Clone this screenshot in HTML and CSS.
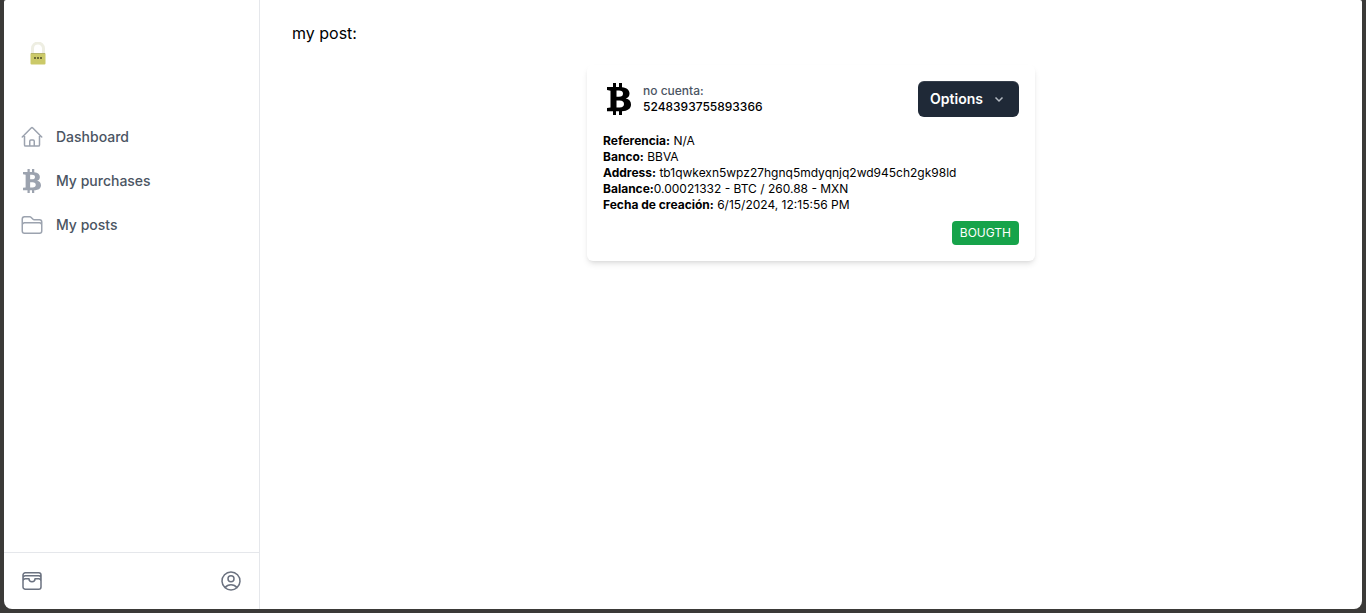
FILE: index.html
```html
<!DOCTYPE html>
<html lang="en">
<head>
<meta charset="utf-8">
<meta name="viewport" content="width=device-width, initial-scale=1">
<title>My posts</title>
<link rel="stylesheet" href="styles.css">
</head>
<body>
<svg class="sprite" aria-hidden="true">
  <symbol id="bitcoin" viewBox="0 0 24 32">
    <path fill-rule="evenodd" d="M6 0h3v4h3V0h3v4.200c5 .5 7.500 2.800 7.500 6.300 0 2.600-1.300 4.200-3.700 5 3.400.7 5.200 2.900 5.200 6 0 4.200-3.300 6.500-9 6.700V32h-3v-3.800H9V32H6v-3.800H0v-3.100l3.500-.6V7.700L0 7.100V4h6zM9.500 7.500v6.300h2.500c2.700 0 4-1 4-3.200 0-2.100-1.400-3.100-4-3.100zM9.500 17.500v7h3.200c2.900 0 4.300-1.200 4.300-3.500s-1.400-3.500-4.300-3.500z"/>
  </symbol>
</svg>
<div class="app">
  <aside class="sidebar">
    <a class="logo" href="#" aria-label="Home">
      <svg width="20" height="24" viewBox="0 0 20 24" aria-hidden="true">
        <path class="shackle" d="M4.500 12V6.500a5.500 5.500 0 0 1 11 0V12"/>
        <rect class="lock" x="2.500" y="11" width="15" height="11.500" rx="1"/>
        <path class="lock-line" d="M3 11.500h14"/>
        <path class="code" d="M6 16h8"/>
      </svg>
    </a>
    <nav class="nav">
      <a href="#">
        <svg class="icon" viewBox="0 0 24 24" aria-hidden="true"><path d="m2.250 12 8.954-8.955c.44-.439 1.152-.439 1.591 0L21.750 12M4.500 9.750v10.125c0 .621.504 1.125 1.125 1.125H9.750v-4.875c0-.621.504-1.125 1.125-1.125h2.250c.621 0 1.125.504 1.125 1.125V21h4.125c.621 0 1.125-.504 1.125-1.125V9.750M8.250 21h8.250"/></svg>
        Dashboard
      </a>
      <a href="#">
        <svg class="coin" aria-hidden="true"><use href="#bitcoin"/></svg>
        My purchases
      </a>
      <a href="#">
        <svg class="icon" viewBox="0 0 24 24" aria-hidden="true"><path d="M2.250 12.750V12A2.250 2.250 0 0 1 4.500 9.750h15A2.250 2.250 0 0 1 21.750 12v.75m-8.690-6.440-2.120-2.120a1.500 1.500 0 0 0-1.061-.44H4.500A2.250 2.250 0 0 0 2.250 6v12a2.250 2.250 0 0 0 2.250 2.250h15A2.250 2.250 0 0 0 21.750 18V9a2.250 2.250 0 0 0-2.250-2.250h-5.379a1.500 1.500 0 0 1-1.060-.44Z"/></svg>
        My posts
      </a>
    </nav>
    <div class="tools">
      <button type="button" aria-label="Wallet">
        <svg class="icon" viewBox="0 0 24 24" aria-hidden="true"><path d="M21 12a2.250 2.250 0 0 0-2.250-2.250H15a3 3 0 1 1-6 0H5.250A2.250 2.250 0 0 0 3 12m18 0v6a2.250 2.250 0 0 1-2.250 2.250H5.250A2.250 2.250 0 0 1 3 18v-6m18 0V9M3 12V9m18 0a2.250 2.250 0 0 0-2.250-2.250H5.250A2.250 2.250 0 0 0 3 9m18 0V6a2.250 2.250 0 0 0-2.250-2.250H5.250A2.250 2.250 0 0 0 3 6v3"/></svg>
      </button>
      <button type="button" aria-label="Account">
        <svg class="icon" viewBox="0 0 24 24" aria-hidden="true"><path d="M17.982 18.725A7.488 7.488 0 0 0 12 15.750a7.488 7.488 0 0 0-5.982 2.975m11.963 0a9 9 0 1 0-11.963 0m11.963 0A8.966 8.966 0 0 1 12 21a8.966 8.966 0 0 1-5.982-2.275M15 9.750a3 3 0 1 1-6 0 3 3 0 0 1 6 0Z"/></svg>
      </button>
    </div>
  </aside>
  <main class="main">
    <p class="title">my post:</p>
    <article class="card">
      <header class="card-head">
        <svg class="card-coin" aria-hidden="true"><use href="#bitcoin"/></svg>
        <div class="account">
          <p class="label">no cuenta:</p>
          <p>5248393755893366</p>
        </div>
        <button class="options" type="button">
          Options
          <svg width="16" height="16" viewBox="0 0 16 16" aria-hidden="true"><path d="m4.500 6.500 3.500 3.500 3.500-3.500"/></svg>
        </button>
      </header>
      <div class="details">
        <p><b>Referencia:</b> N/A</p>
        <p><b>Banco:</b> BBVA</p>
        <p><b>Address:</b> tb1qwkexn5wpz27hgnq5mdyqnjq2wd945ch2gk98ld</p>
        <p><b>Balance:</b>0.00021332 - BTC / 260.88 - MXN</p>
        <p><b>Fecha de creación:</b> 6/15/2024, 12:15:56 PM</p>
      </div>
      <span class="badge">BOUGTH</span>
    </article>
  </main>
</div>
</body>
</html>
```
FILE: styles.css
```css
* {
  box-sizing: border-box;
}

body {
  margin: 0;
  padding: 0 4px 4px;
  min-height: 100vh;
  display: flex;
  background: #3b3a38;
  color: #000;
  font-family: Inter, "Liberation Sans", sans-serif;
  font-size: 16px;
  line-height: 24px;
}

p {
  margin: 0;
}

button {
  border: 0;
  background: none;
  font: inherit;
  cursor: pointer;
}

.sprite {
  position: absolute;
  width: 0;
  height: 0;
}

.app {
  flex: 1;
  display: flex;
  overflow: hidden;
  background: #fff;
  border-radius: 2px 2px 8px 8px;
}

.sidebar {
  width: 256px;
  flex-shrink: 0;
  display: flex;
  flex-direction: column;
  border-right: 1px solid #e5e7eb;
}

.logo {
  display: flex;
  padding: 42px 24px 0;
}

.shackle {
  fill: none;
  stroke: #eeeee2;
  stroke-width: 3;
}

.lock {
  fill: #cbc968;
}

.lock-line {
  stroke: #b5b36a;
}

.code {
  stroke: #6b6935;
  stroke-width: 2;
  stroke-dasharray: 2 1;
}

.nav {
  flex: 1;
  display: flex;
  flex-direction: column;
  gap: 4px;
  padding: 51px 8px 0;
}

.nav a {
  display: flex;
  align-items: center;
  gap: 12px;
  padding: 8px;
  color: #4b5563;
  font-size: 14px;
  font-weight: 500;
  text-decoration: none;
}

.icon {
  width: 24px;
  height: 24px;
  fill: none;
  stroke: currentColor;
  stroke-width: 1.5;
  stroke-linecap: round;
  stroke-linejoin: round;
}

.nav svg {
  color: #9ca3af;
}

.coin {
  width: 24px;
  height: 24px;
  fill: currentColor;
}

.tools {
  display: flex;
  justify-content: space-between;
  padding: 16px;
  border-top: 1px solid #e5e7eb;
}

.tools button {
  display: flex;
  padding: 0;
  color: #6b7280;
}

.main {
  flex: 1;
  display: flex;
  flex-direction: column;
  padding: 21px 32px;
}

.card {
  width: 100%;
  max-width: 448px;
  margin: 20px auto 0;
  padding: 16px;
  display: flex;
  flex-direction: column;
  border-radius: 6px;
  box-shadow: 0 4px 6px -1px rgb(0 0 0 / 0.1), 0 2px 4px -2px rgb(0 0 0 / 0.1);
  font-size: 12px;
  line-height: 16px;
}

.card-head {
  display: flex;
  align-items: center;
  gap: 8px;
}

.card-coin {
  width: 32px;
  height: 32px;
}

.account {
  font-weight: 500;
}

.label {
  color: #4b5563;
}

.options {
  display: flex;
  align-items: center;
  gap: 8px;
  margin-left: auto;
  padding: 8px 12px;
  border-radius: 6px;
  background: #1f2937;
  box-shadow: inset 0 1px 0 rgb(255 255 255 / 0.1);
  color: #fff;
  font-size: 14px;
  font-weight: 600;
  line-height: 20px;
}

.options svg {
  fill: none;
  stroke: #b4bac2;
  stroke-width: 1.5;
}

.details {
  margin-top: 16px;
}

.badge {
  align-self: flex-end;
  margin-top: 8px;
  padding: 4px 8px;
  border-radius: 4px;
  background: #16a34a;
  color: #fff;
}
```
